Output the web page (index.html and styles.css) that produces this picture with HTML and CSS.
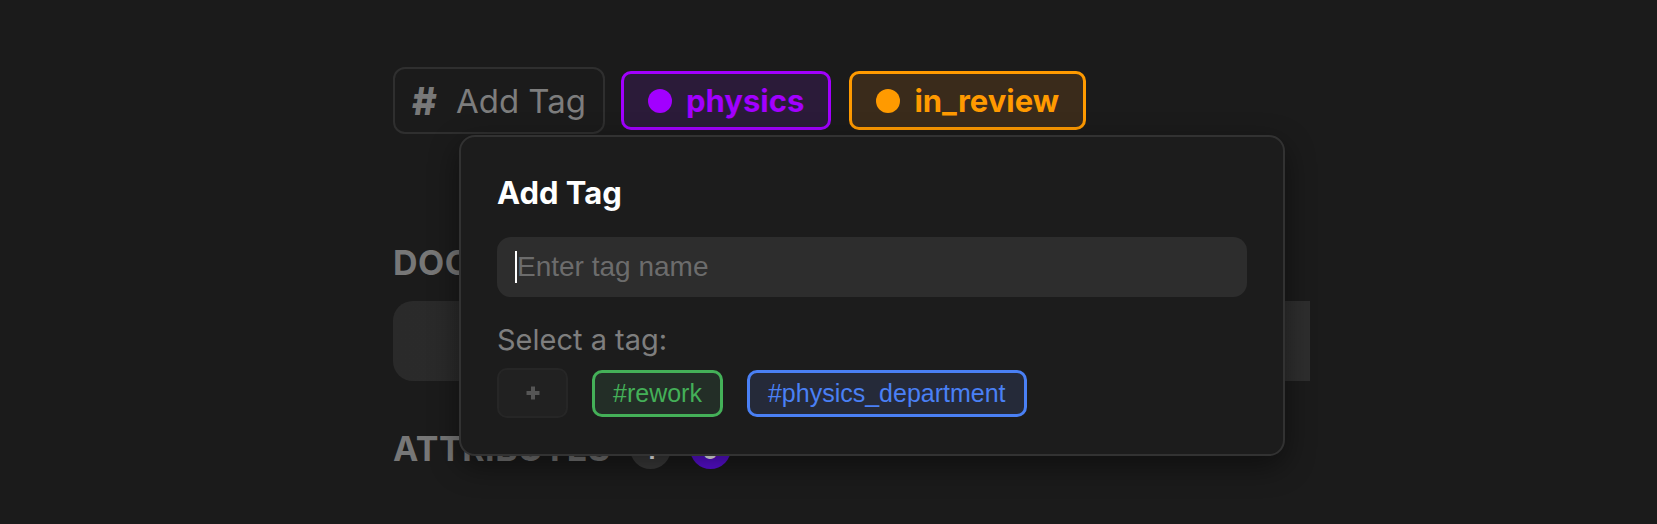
FILE: index.html
```html
<!DOCTYPE html>
<html lang="en">
<head>
<meta charset="utf-8">
<title>Add Tag</title>
<link rel="stylesheet" href="styles.css">
</head>
<body>
<div class="page">
  <div class="tag-row">
    <div class="add-wrap">
      <button class="add-btn"><span class="hash">#</span><span class="add-label">Add Tag</span></button>
      <div class="popup">
        <h2 class="popup-title">Add Tag</h2>
        <div class="input"><span class="caret"></span><span class="placeholder">Enter tag name</span></div>
        <div class="select-label">Select a tag:</div>
        <div class="chips">
          <button class="chip chip-plus">
            <svg width="16" height="16" viewBox="0 0 16 16"><path d="M8 1.5v13M1.5 8h13" stroke="#555" stroke-width="4" fill="none"/></svg>
          </button>
          <button class="chip chip-green">#rework</button>
          <button class="chip chip-blue">#physics_department</button>
        </div>
      </div>
    </div>
    <div class="tag tag-purple"><span class="dot"></span>physics</div>
    <div class="tag tag-orange"><span class="dot"></span>in_review</div>
  </div>

  <h3 class="section-title doc-title">DOCUMENTS</h3>
  <div class="doc-box"></div>

  <div class="attr-row">
    <h3 class="section-title">ATTRIBUTES</h3>
    <span class="badge badge-gray">1</span>
    <span class="badge badge-purple">0</span>
  </div>
</div>
</body>
</html>
```
FILE: styles.css
```css
html, body {
  margin: 0;
  padding: 0;
  background: #1b1b1b;
  height: 100%;
  overflow: hidden;
}

body {
  font-family: Inter, "Noto Sans", sans-serif;
  color: #fff;
}

.page {
  padding: 67px 0 0 393px;
}

.tag-row {
  display: flex;
  align-items: center;
  gap: 16px;
  height: 67px;
}

.add-wrap {
  position: relative;
}

.add-btn {
  display: flex;
  align-items: center;
  height: 67px;
  box-sizing: border-box;
  padding: 0 17px 0 17px;
  background: #1b1b1b;
  border: 2px solid #2f2f2f;
  border-radius: 12px;
  font-family: Inter, sans-serif;
  color: #7d7d7d;
  cursor: pointer;
}

.hash {
  font-size: 38px;
  font-weight: 800;
  margin-right: 19px;
  color: #787878;
}

.add-label {
  font-size: 33px;
  font-weight: 400;
}

.tag {
  display: flex;
  align-items: center;
  height: 59px;
  box-sizing: border-box;
  padding: 0 24px;
  border-radius: 10px;
  border: 3px solid;
  font-size: 31px;
  font-weight: 700;
}

.tag .dot {
  width: 24px;
  height: 24px;
  border-radius: 50%;
  margin-right: 14px;
  background: currentColor;
}

.tag-purple {
  color: #a200ff;
  background: #2b1b39;
  border-color: #a200ff;
}

.tag-orange {
  color: #ff9a00;
  background: #3a2b1b;
  border-color: #ff9a00;
  margin-left: 2px;
}

.popup {
  position: absolute;
  left: 66px;
  top: 68px;
  width: 826px;
  box-sizing: border-box;
  padding: 36px;
  background: #1c1c1c;
  border: 2px solid #323232;
  border-radius: 16px;
  box-shadow: 0 10px 30px rgba(0, 0, 0, 0.45);
  z-index: 10;
}

.popup-title {
  margin: 0;
  padding-top: 1px;
  font-size: 31px;
  line-height: 37px;
  font-weight: 700;
  color: #fff;
}

.input {
  margin-top: 26px;
  height: 60px;
  border-radius: 14px;
  background: #2d2d2d;
  display: flex;
  align-items: center;
  padding-left: 18px;
  font-family: "Liberation Sans", Arial, sans-serif;
  font-size: 28px;
  color: #6c6c6c;
}

.caret {
  width: 2px;
  height: 32px;
  background: #fff;
}

.select-label {
  margin-top: 25px;
  font-size: 29px;
  line-height: 35px;
  color: #7e7e7e;
}

.chips {
  margin-top: 11px;
  display: flex;
  align-items: center;
  gap: 24px;
}

.chip {
  box-sizing: border-box;
  height: 47px;
  padding: 0 18px;
  border-radius: 10px;
  border: 3px solid;
  font-family: "Liberation Sans", Arial, sans-serif;
  font-size: 25px;
  cursor: pointer;
}

.chip-plus {
  width: 71px;
  height: 50px;
  background: #212121;
  border: 2px solid #262626;
  display: flex;
  align-items: center;
  justify-content: center;
  padding: 0;
}

.chip-green {
  color: #44b058;
  border-color: #44b058;
  background: #232e27;
}

.chip-blue {
  color: #4a80f5;
  border-color: #4a80f5;
  background: #252a39;
}

.section-title {
  margin: 0;
  font-size: 34px;
  font-weight: 700;
  color: #777;
  letter-spacing: 0.5px;
  line-height: 40px;
}

.doc-title {
  margin-top: 109px;
}

.doc-box {
  margin-top: 18px;
  width: 917px;
  height: 80px;
  border-radius: 20px 0 0 20px;
  background: linear-gradient(90deg, #2a2a2a, #2e2e2e);
}

.attr-row {
  margin-top: 47px;
  display: flex;
  align-items: center;
  gap: 19px;
}

.badge {
  width: 41px;
  height: 41px;
  border-radius: 50%;
  display: flex;
  align-items: flex-end;
  justify-content: center;
  box-sizing: border-box;
  padding-bottom: 6px;
  font-size: 24px;
  line-height: 24px;
  font-weight: 700;
  color: #fff;
}

.badge-gray {
  background: #3a3a3a;
}

.badge-purple {
  background: #5a0fd8;
}
```
